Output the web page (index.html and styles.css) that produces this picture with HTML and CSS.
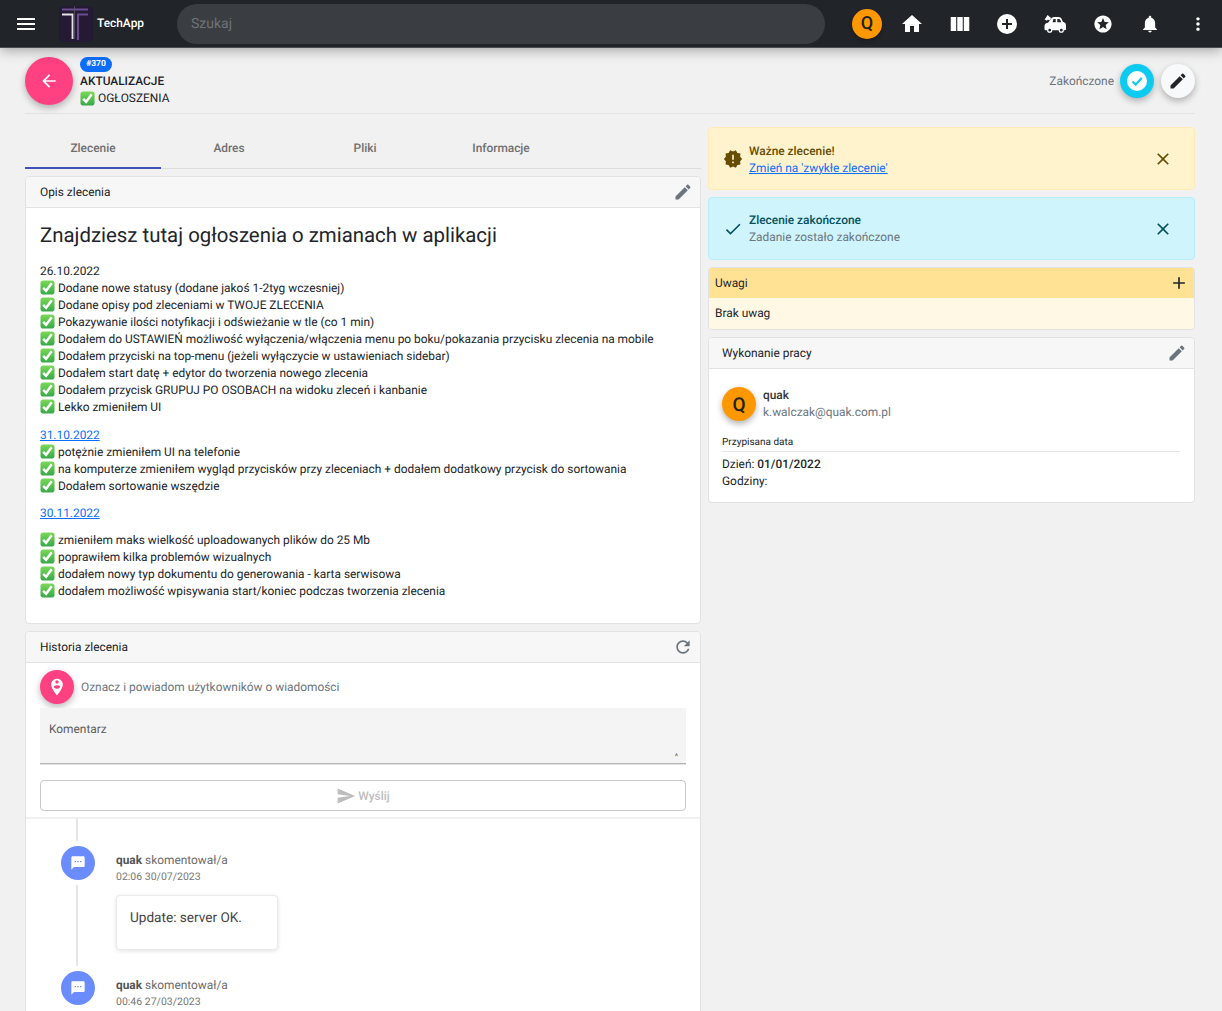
FILE: index.html
```html
<!DOCTYPE html>
<html lang="pl">
<head>
    <meta charset="UTF-8">
    <meta name="viewport" content="width=device-width, initial-scale=1.0">
    <title>TechApp</title>
    <link rel="stylesheet" href="styles.css">
</head>
<body>
    <svg class="defs" width="0" height="0" aria-hidden="true">
        <defs>
            <linearGradient id="tickFill" x1="0" y1="0" x2="0" y2="1">
                <stop offset="0" stop-color="#7bd957"/>
                <stop offset="1" stop-color="#37a84a"/>
            </linearGradient>
        </defs>
        <symbol id="tick" viewBox="0 0 16 16">
            <rect x="0.5" y="0.5" width="15" height="15" rx="3" fill="url(#tickFill)"/>
            <path d="M3.4 8.300l3.100 3.200 6-8" fill="none" stroke="#fff" stroke-width="2.600"/>
        </symbol>
        <symbol id="edit" viewBox="0 0 24 24">
            <path d="M3 17.25V21h3.75L17.81 9.94l-3.75-3.75L3 17.25zM20.71 7.04c.39-.39.39-1.02 0-1.41l-2.34-2.34c-.39-.39-1.02-.39-1.41 0l-1.83 1.83 3.75 3.75 1.83-1.83z"/>
        </symbol>
        <symbol id="close" viewBox="0 0 24 24">
            <path d="M19 6.41L17.59 5 12 10.59 6.41 5 5 6.41 10.59 12 5 17.59 6.41 19 12 13.41 17.59 19 19 17.59 13.41 12z"/>
        </symbol>
        <symbol id="sms" viewBox="0 0 24 24">
            <path d="M20 2H4c-1.1 0-1.99.9-1.99 2L2 22l4-4h14c1.1 0 2-.9 2-2V4c0-1.1-.9-2-2-2zM9 11H7V9h2v2zm4 0h-2V9h2v2zm4 0h-2V9h2v2z"/>
        </symbol>
    </svg>

    <!-- Top bar -->
    <nav class="navbar">
        <svg class="nav-menu" viewBox="0 0 24 24"><path d="M3 18h18v-2H3v2zm0-5h18v-2H3v2zm0-7v2h18V6H3z"/></svg>
        <div class="logo">
            <svg viewBox="0 0 34 36" width="34" height="36">
                <rect width="34" height="36" rx="4" fill="#241a33"/>
                <path d="M3 3.500h26" stroke="#6b4c91" stroke-width="2"/>
                <path d="M15.600 0v33" stroke="#5c5666" stroke-width="0.800"/>
                <path d="M3 8.500h10.500V33" stroke="#e4e1e8" stroke-width="1.800" fill="none"/>
                <path d="M29 8.500H19V34" stroke="#6b4c91" stroke-width="2" fill="none"/>
            </svg>
        </div>
        <span class="brand">TechApp</span>
        <div class="search">Szukaj</div>
        <div class="avatar nav-avatar">Q</div>
        <div class="nav-icons">
            <svg viewBox="0 0 24 24"><path d="M10 20v-6h4v6h5v-8h3L12 3 2 12h3v8z"/></svg>
            <svg viewBox="1.500 0.500 22 22"><path d="M10 18h5V5h-5v13zm-6 0h5V5H4v13zM16 5v13h5V5h-5z"/></svg>
            <svg viewBox="0 0 24 24"><circle cx="12" cy="12" r="10"/><path d="M17 13h-4v4h-2v-4H7v-2h4V7h2v4h4z" fill="#212529"/></svg>
            <svg viewBox="0 0 24 24"><path d="M7.500 7.500C8.200 6 9.400 5 11 5h4.500c1.500 0 2.600.7 3.200 2.100l1.300 3c1.500.3 3 1.200 3 3.100V17c0 .8-.4 1.200-1 1.200h-1.100a2.600 2.600 0 0 1-5.200 0H9.300a2.600 2.600 0 0 1-5.200 0H2.500c-.8 0-1-.5-1-1.200v-3c0-2 1.500-3 3.500-3.300zM10.500 7l-.9 3.300h3.100V7zm3.800 0v3.300h4l-1.100-2.600c-.2-.5-.7-.7-1.200-.7zM6.700 16.800a1.400 1.400 0 1 0 0 2.800 1.400 1.400 0 0 0 0-2.800zm11.600 0a1.400 1.400 0 1 0 0 2.800 1.400 1.400 0 0 0 0-2.800z"/><path d="M4.500 3l3.600 3-1.700 2.500-1.400-.9-1.200 1.100L1.500 7.200l1.300-1.200z"/></svg>
            <svg viewBox="-2 -2 28 28"><path d="M11.990 2C6.470 2 2 6.480 2 12s4.470 10 9.990 10C17.520 22 22 17.520 22 12S17.520 2 11.990 2zm4.240 16L12 15.450 7.770 18l1.120-4.810-3.730-3.230 4.920-.42L12 5l1.920 4.530 4.920.42-3.730 3.230L16.230 18z"/></svg>
            <svg viewBox="-2 -2 28 28"><path d="M12 22c1.100 0 2-.9 2-2h-4c0 1.100.89 2 2 2zm6-6v-5c0-3.070-1.640-5.640-4.500-6.320V4c0-.83-.67-1.500-1.500-1.500s-1.500.67-1.500 1.500v.68C7.630 5.360 6 7.920 6 11v5l-2 2v1h16v-1l-2-2z"/></svg>
            <svg viewBox="-2 -2 28 28"><path d="M12 8c1.100 0 2-.9 2-2s-.9-2-2-2-2 .9-2 2 .9 2 2 2zm0 2c-1.100 0-2 .9-2 2s.9 2 2 2 2-.9 2-2-.9-2-2-2zm0 6c-1.100 0-2 .9-2 2s.9 2 2 2 2-.9 2-2-.9-2-2-2z"/></svg>
        </div>
    </nav>

    <div class="page">
        <!-- Job header -->
        <header class="job-header">
            <div class="fab fab-pink back-btn">
                <svg viewBox="0 0 24 24"><path d="M20 11H7.830l5.590-5.590L12 4l-8 8 8 8 1.410-1.410L7.830 13H20v-2z"/></svg>
            </div>
            <div class="job-title">
                <span class="badge">#370</span>
                <div class="job-name">AKTUALIZACJE</div>
                <div class="job-sub"><svg class="tick"><use href="#tick"/></svg> OGŁOSZENIA</div>
            </div>
            <div class="job-status">
                <span>Zakończone</span>
                <div class="fab status-btn">
                    <svg viewBox="0 0 24 24"><circle cx="12" cy="12" r="10" fill="#fff"/><path d="M7.500 12.500l3.200 3.200 6-6.600" fill="none" stroke="#0dcaf0" stroke-width="2.200"/></svg>
                </div>
                <div class="fab edit-btn"><svg viewBox="0 0 24 24"><use href="#edit"/></svg></div>
            </div>
        </header>

        <div class="columns">
            <main class="col-left">
                <div class="tabs">
                    <div class="tab active">Zlecenie</div>
                    <div class="tab">Adres</div>
                    <div class="tab">Pliki</div>
                    <div class="tab">Informacje</div>
                </div>

                <section class="card">
                    <div class="card-header">
                        <span>Opis zlecenia</span>
                        <svg class="header-icon"><use href="#edit"/></svg>
                    </div>
                    <div class="card-body description">
                        <h2>Znajdziesz tutaj ogłoszenia o zmianach w aplikacji</h2>
                        <p>26.10.2022<br>
                            <svg class="tick"><use href="#tick"/></svg> Dodane nowe statusy (dodane jakoś 1-2tyg wczesniej)<br>
                            <svg class="tick"><use href="#tick"/></svg> Dodane opisy pod zleceniami w TWOJE ZLECENIA<br>
                            <svg class="tick"><use href="#tick"/></svg> Pokazywanie ilości notyfikacji i odświeżanie w tle (co 1 min)<br>
                            <svg class="tick"><use href="#tick"/></svg> Dodałem do USTAWIEŃ możliwość wyłączenia/włączenia menu po boku/pokazania przycisku zlecenia na mobile<br>
                            <svg class="tick"><use href="#tick"/></svg> Dodałem przyciski na top-menu (jeżeli wyłączycie w ustawieniach sidebar)<br>
                            <svg class="tick"><use href="#tick"/></svg> Dodałem start datę + edytor do tworzenia nowego zlecenia<br>
                            <svg class="tick"><use href="#tick"/></svg> Dodałem przycisk GRUPUJ PO OSOBACH na widoku zleceń i kanbanie<br>
                            <svg class="tick"><use href="#tick"/></svg> Lekko zmieniłem UI</p>
                        <p><a href="#">31.10.2022</a><br>
                            <svg class="tick"><use href="#tick"/></svg> potężnie zmieniłem UI na telefonie<br>
                            <svg class="tick"><use href="#tick"/></svg> na komputerze zmieniłem wygląd przycisków przy zleceniach + dodałem dodatkowy przycisk do sortowania<br>
                            <svg class="tick"><use href="#tick"/></svg> Dodałem sortowanie wszędzie</p>
                        <p><a href="#">30.11.2022</a></p>
                        <p><svg class="tick"><use href="#tick"/></svg> zmieniłem maks wielkość uploadowanych plików do 25 Mb<br>
                            <svg class="tick"><use href="#tick"/></svg> poprawiłem kilka problemów wizualnych<br>
                            <svg class="tick"><use href="#tick"/></svg> dodałem nowy typ dokumentu do generowania - karta serwisowa<br>
                            <svg class="tick"><use href="#tick"/></svg> dodałem możliwość wpisywania start/koniec podczas tworzenia zlecenia</p>
                    </div>
                </section>

                <section class="card history">
                    <div class="card-header">
                        <span>Historia zlecenia</span>
                        <svg class="header-icon" viewBox="0 0 24 24"><path d="M17.650 6.350C16.200 4.900 14.210 4 12 4c-4.420 0-7.990 3.580-7.990 8s3.570 8 7.990 8c3.730 0 6.840-2.550 7.730-6h-2.080c-.82 2.330-3.040 4-5.650 4-3.310 0-6-2.690-6-6s2.690-6 6-6c1.660 0 3.140.69 4.220 1.780L13 11h7V4l-2.350 2.350z"/></svg>
                    </div>
                    <div class="comment-form">
                        <div class="mention">
                            <div class="fab fab-pink mention-btn">
                                <svg viewBox="0 0 24 24"><path d="M12 2C8.140 2 5 5.140 5 9c0 5.250 7 13 7 13s7-7.750 7-13c0-3.860-3.140-7-7-7zm0 2c1.100 0 2 .9 2 2 0 1.110-.9 2-2 2s-2-.89-2-2c0-1.100.9-2 2-2zm0 10c-1.670 0-3.140-.85-4-2.150.02-1.320 2.670-2.050 4-2.050s3.980.73 4 2.050c-.86 1.300-2.330 2.150-4 2.150z"/></svg>
                            </div>
                            <span>Oznacz i powiadom użytkowników o wiadomości</span>
                        </div>
                        <div class="comment-field">Komentarz<span class="resize">^</span></div>
                        <div class="send-btn">
                            <svg viewBox="0 0 24 24"><path d="M2.010 21L23 12 2.010 3 2 10l15 2-15 2z"/></svg>
                            <span>Wyślij</span>
                        </div>
                    </div>
                    <div class="timeline">
                        <div class="entry">
                            <div class="entry-icon"><svg viewBox="0 0 24 24"><use href="#sms"/></svg></div>
                            <div class="entry-main">
                                <div class="entry-who"><b>quak</b> skomentował/a</div>
                                <div class="entry-time">02:06 30/07/2023</div>
                                <div class="entry-bubble">Update: server OK.</div>
                            </div>
                        </div>
                        <div class="entry">
                            <div class="entry-icon"><svg viewBox="0 0 24 24"><use href="#sms"/></svg></div>
                            <div class="entry-main">
                                <div class="entry-who"><b>quak</b> skomentował/a</div>
                                <div class="entry-time">00:46 27/03/2023</div>
                            </div>
                        </div>
                    </div>
                </section>
            </main>

            <aside class="col-right">
                <div class="alert alert-warning">
                    <svg class="alert-icon" viewBox="0 0 24 24"><path d="M23 12l-2.440-2.780.34-3.680-3.610-.82-1.890-3.180L12 3 8.600 1.540 6.710 4.720l-3.610.81.34 3.680L1 12l2.440 2.780-.34 3.690 3.610.82 1.890 3.180L12 21l3.400 1.460 1.890-3.180 3.610-.82-.34-3.680L23 12zm-10 5h-2v-2h2v2zm0-4h-2V7h2v6z"/></svg>
                    <div class="alert-text">
                        <div class="alert-title">Ważne zlecenie!</div>
                        <a href="#">Zmień na 'zwykłe zlecenie'</a>
                    </div>
                    <svg class="alert-close"><use href="#close"/></svg>
                </div>
                <div class="alert alert-info">
                    <svg class="alert-icon" viewBox="0 0 24 24"><path d="M9 16.170L4.830 12l-1.410 1.410L9 19 21 7l-1.410-1.410z"/></svg>
                    <div class="alert-text">
                        <div class="alert-title">Zlecenie zakończone</div>
                        <div class="alert-desc">Zadanie zostało zakończone</div>
                    </div>
                    <svg class="alert-close"><use href="#close"/></svg>
                </div>

                <section class="notes">
                    <div class="notes-header">
                        <span>Uwagi</span>
                        <svg viewBox="0 0 24 24"><path d="M19 13h-6v6h-2v-6H5v-2h6V5h2v6h6v2z"/></svg>
                    </div>
                    <div class="notes-body">Brak uwag</div>
                </section>

                <section class="card work">
                    <div class="card-header">
                        <span>Wykonanie pracy</span>
                        <svg class="header-icon"><use href="#edit"/></svg>
                    </div>
                    <div class="work-body">
                        <div class="person">
                            <div class="avatar person-avatar">Q</div>
                            <div>
                                <div class="person-name">quak</div>
                                <div class="person-mail">k.walczak@quak.com.pl</div>
                            </div>
                        </div>
                        <div class="date-label">Przypisana data</div>
                        <div class="date-row">Dzień: <b>01/01/2022</b></div>
                        <div class="date-row">Godziny:</div>
                    </div>
                </section>
            </aside>
        </div>
    </div>
</body>
</html>
```

FILE: styles.css
```css
* {
    box-sizing: border-box;
}
html, body {
    height: 100%;
}
body {
    margin: 0;
    height: 1011px;
    overflow: hidden;
    background: #f1f1f1;
    color: #212529;
    font-family: Roboto, 'Liberation Sans', sans-serif;
    font-size: 11.900px;
    line-height: 17px;
    text-rendering: geometricPrecision;
}
a {
    color: #0d6efd;
}
.defs {
    position: absolute;
}

/* Top bar */
.navbar {
    display: flex;
    align-items: center;
    height: 48px;
    padding-left: 14px;
    background: #212529;
    box-shadow: 0 2px 12px rgba(0, 0, 0, 0.35);
    border-bottom: 1px solid #4a4c4f;
    position: relative;
}
.nav-menu {
    width: 24px;
    height: 24px;
    fill: #fff;
}
.logo {
    display: flex;
    margin-left: 21px;
}
.brand {
    width: 47px;
    margin-left: 4px;
    color: #fff;
    font-size: 11.900px;
    font-weight: 500;
}
.search {
    width: 648px;
    height: 40px;
    margin-left: 33px;
    padding-left: 14px;
    border-radius: 20px;
    background: #3a3d42;
    color: #6e7276;
    font-size: 14px;
    line-height: 40px;
}
.avatar {
    display: flex;
    align-items: center;
    justify-content: center;
    border-radius: 50%;
    background: #ff9800;
    color: #212121;
    font-weight: 500;
}
.nav-avatar {
    width: 30px;
    height: 30px;
    margin-left: 27px;
    font-size: 18px;
    box-shadow: 0 2px 4px rgba(0, 0, 0, 0.3);
}
.nav-icons {
    display: flex;
    gap: 23.670px;
    margin-left: 18px;
}
.nav-icons svg {
    width: 24px;
    height: 24px;
    fill: #fff;
}

/* Job header */
.page {
    padding: 0 27px 0 25px;
}
.job-header {
    display: flex;
    align-items: flex-start;
    height: 66px;
    padding-top: 9px;
    border-bottom: 1px solid #e3e3e3;
}
.fab {
    display: flex;
    align-items: center;
    justify-content: center;
    flex: none;
    border-radius: 50%;
    box-shadow: 0 3px 7px rgba(0, 0, 0, 0.28);
}
.fab-pink {
    background: #ff4081;
}
.fab svg {
    fill: #fff;
}
.back-btn {
    width: 48px;
    height: 48px;
}
.back-btn svg {
    width: 20px;
    height: 20px;
}
.job-title {
    margin-left: 7px;
}
.badge {
    display: block;
    width: 32px;
    height: 15px;
    border-radius: 8px;
    background: #0d6efd;
    color: #fff;
    font-size: 8.500px;
    font-weight: 700;
    line-height: 15px;
    text-align: center;
}
.job-name {
    font-weight: 500;
    line-height: 17px;
    margin-top: 1px;
}
.job-sub {
    display: flex;
    align-items: center;
    gap: 3px;
}
.tick {
    display: inline-block;
    width: 15px;
    height: 15px;
    vertical-align: -3px;
}
.job-status {
    display: flex;
    align-items: center;
    margin-left: auto;
    margin-top: 7px;
    color: #6c757d;
}
.status-btn {
    width: 34px;
    height: 34px;
    margin-left: 6px;
    background: #0dcaf0;
}
.status-btn svg {
    width: 24px;
    height: 24px;
}
.edit-btn {
    width: 34px;
    height: 34px;
    margin-left: 7px;
    background: #f8f9fa;
}
.edit-btn svg {
    width: 20px;
    height: 20px;
    fill: #212529;
}

/* Columns */
.columns {
    display: grid;
    grid-template-columns: 676px 487px;
    column-gap: 7px;
    padding-top: 13px;
}
.col-left, .col-right {
    display: flex;
    flex-direction: column;
    gap: 7px;
    min-width: 0;
}

.tabs {
    display: flex;
    height: 42px;
    border-bottom: 1px solid #dcdcdc;
}
.tab {
    width: 136px;
    color: #6f6f6f;
    font-weight: 500;
    line-height: 42px;
    text-align: center;
}
.tab.active {
    height: 42px;
    border-bottom: 2px solid #3f51b5;
}

/* Cards */
.card {
    background: #fff;
    border: 1px solid #e2e2e2;
    border-radius: 4px;
}
.card-header {
    display: flex;
    align-items: center;
    justify-content: space-between;
    height: 31px;
    padding: 0 7px 0 14px;
    background: #f7f7f7;
    border-bottom: 1px solid #e2e2e2;
    border-radius: 4px 4px 0 0;
}
.header-icon {
    width: 20px;
    height: 20px;
    fill: #6c757d;
}
.description {
    height: 415px;
    padding: 12px 14px 0;
}
.description h2 {
    margin: 0 0 13px;
    font-size: 20.400px;
    font-weight: 400;
    line-height: 30px;
}
.description p {
    margin: 0 0 10px;
}
.description p:first-of-type {
    margin-bottom: 11px;
}

/* History */
.history {
    height: 600px;
}
.comment-form {
    padding: 7px 14px 6px;
    border-bottom: 2px solid #f1f1f1;
}
.mention {
    display: flex;
    align-items: center;
    gap: 7px;
    height: 34px;
    color: #6c757d;
}
.mention-btn {
    width: 34px;
    height: 34px;
}
.mention-btn svg {
    width: 20px;
    height: 20px;
}
.comment-field {
    position: relative;
    height: 56px;
    margin-top: 4px;
    padding: 13px 9px 0;
    background: #f4f4f4;
    border-bottom: 1px solid #b5b5b5;
    box-shadow: 0 1px 0 #e2e2e2;
    color: #5c5c5c;
}
.resize {
    position: absolute;
    right: 8px;
    bottom: 0;
    font-size: 8px;
    line-height: 12px;
}
.send-btn {
    display: flex;
    align-items: center;
    justify-content: center;
    gap: 2px;
    height: 31px;
    margin-top: 16px;
    padding-top: 1px;
    border: 1px solid #c8c8c8;
    border-radius: 4px;
    color: #bdbdbd;
    font-weight: 500;
}
.send-btn svg {
    width: 20px;
    height: 20px;
    fill: #bdbdbd;
}
.timeline {
    position: relative;
    padding: 27px 0 0 35px;
}
.timeline::before {
    content: "";
    position: absolute;
    top: 0;
    bottom: 0;
    left: 50px;
    width: 2px;
    background: #e6e6e6;
}
.entry {
    position: relative;
    display: flex;
    gap: 21px;
    margin-bottom: 21px;
}
.entry-icon {
    position: relative;
    display: flex;
    align-items: center;
    justify-content: center;
    flex: none;
    width: 34px;
    height: 34px;
    border-radius: 50%;
    background: #6b8cff;
    box-shadow: 0 0 0 5px #fff;
}
.entry-icon svg {
    width: 16px;
    height: 16px;
    fill: #fff;
}
.entry-who {
    margin-top: 6px;
    color: #6c6c6c;
}
.entry-who b {
    color: #555;
    font-weight: 700;
}
.entry-time {
    color: #777;
    font-size: 10.500px;
    line-height: 16px;
}
.entry-bubble {
    width: 162px;
    height: 55px;
    margin-top: 10px;
    padding: 14px 13px;
    border: 1px solid #eaeaea;
    border-radius: 4px;
    background: #fff;
    box-shadow: 0 1px 4px rgba(0, 0, 0, 0.12);
    color: #444;
    font-size: 13.600px;
}

/* Right column */
.alert {
    display: flex;
    align-items: center;
    height: 63px;
    padding: 0 21px 0 14px;
    border: 1px solid transparent;
    border-radius: 4px;
}
.alert-warning {
    background: #fff3cd;
    border-color: #ffecb5;
    color: #664d03;
}
.alert-warning .alert-text {
    margin-top: 2px;
}
.alert-warning a {
    color: #0d6efd;
}
.alert-info {
    background: #cff4fc;
    border-color: #b6effb;
    color: #055160;
}
.alert-icon {
    flex: none;
    width: 20px;
    height: 20px;
    fill: currentColor;
}
.alert-text {
    flex: 1;
    margin-left: 6px;
}
.alert-title {
    font-weight: 500;
}
.alert-desc {
    color: #6c757d;
}
.alert-close {
    width: 20px;
    height: 20px;
    fill: currentColor;
}
.notes {
    border: 1px solid #e2e2e2;
    border-radius: 4px;
    overflow: hidden;
}
.notes-header {
    display: flex;
    align-items: center;
    justify-content: space-between;
    height: 30px;
    padding: 0 5px 0 6px;
    background: #ffe294;
}
.notes-header svg {
    width: 20px;
    height: 20px;
    fill: #212529;
}
.notes-body {
    height: 31px;
    padding: 0 6px;
    background: #fff8e5;
    line-height: 30px;
}
.work .card-header {
    padding-left: 13px;
}
.work-body {
    height: 133px;
    padding: 18px 14px 0 13px;
}
.person {
    display: flex;
    align-items: center;
    gap: 7px;
}
.person-avatar {
    width: 34px;
    height: 34px;
    font-size: 19px;
    box-shadow: 0 3px 6px rgba(0, 0, 0, 0.3);
}
.person-name {
    font-weight: 500;
    color: #333;
}
.person-mail {
    color: #6c757d;
}
.date-label {
    margin-top: 13px;
    border-bottom: 1px solid #e6e6e6;
    font-size: 10px;
}
.date-row {
    line-height: 17px;
}
.date-label + .date-row {
    margin-top: 4px;
}
.date-row b {
    font-weight: 500;
}
```
